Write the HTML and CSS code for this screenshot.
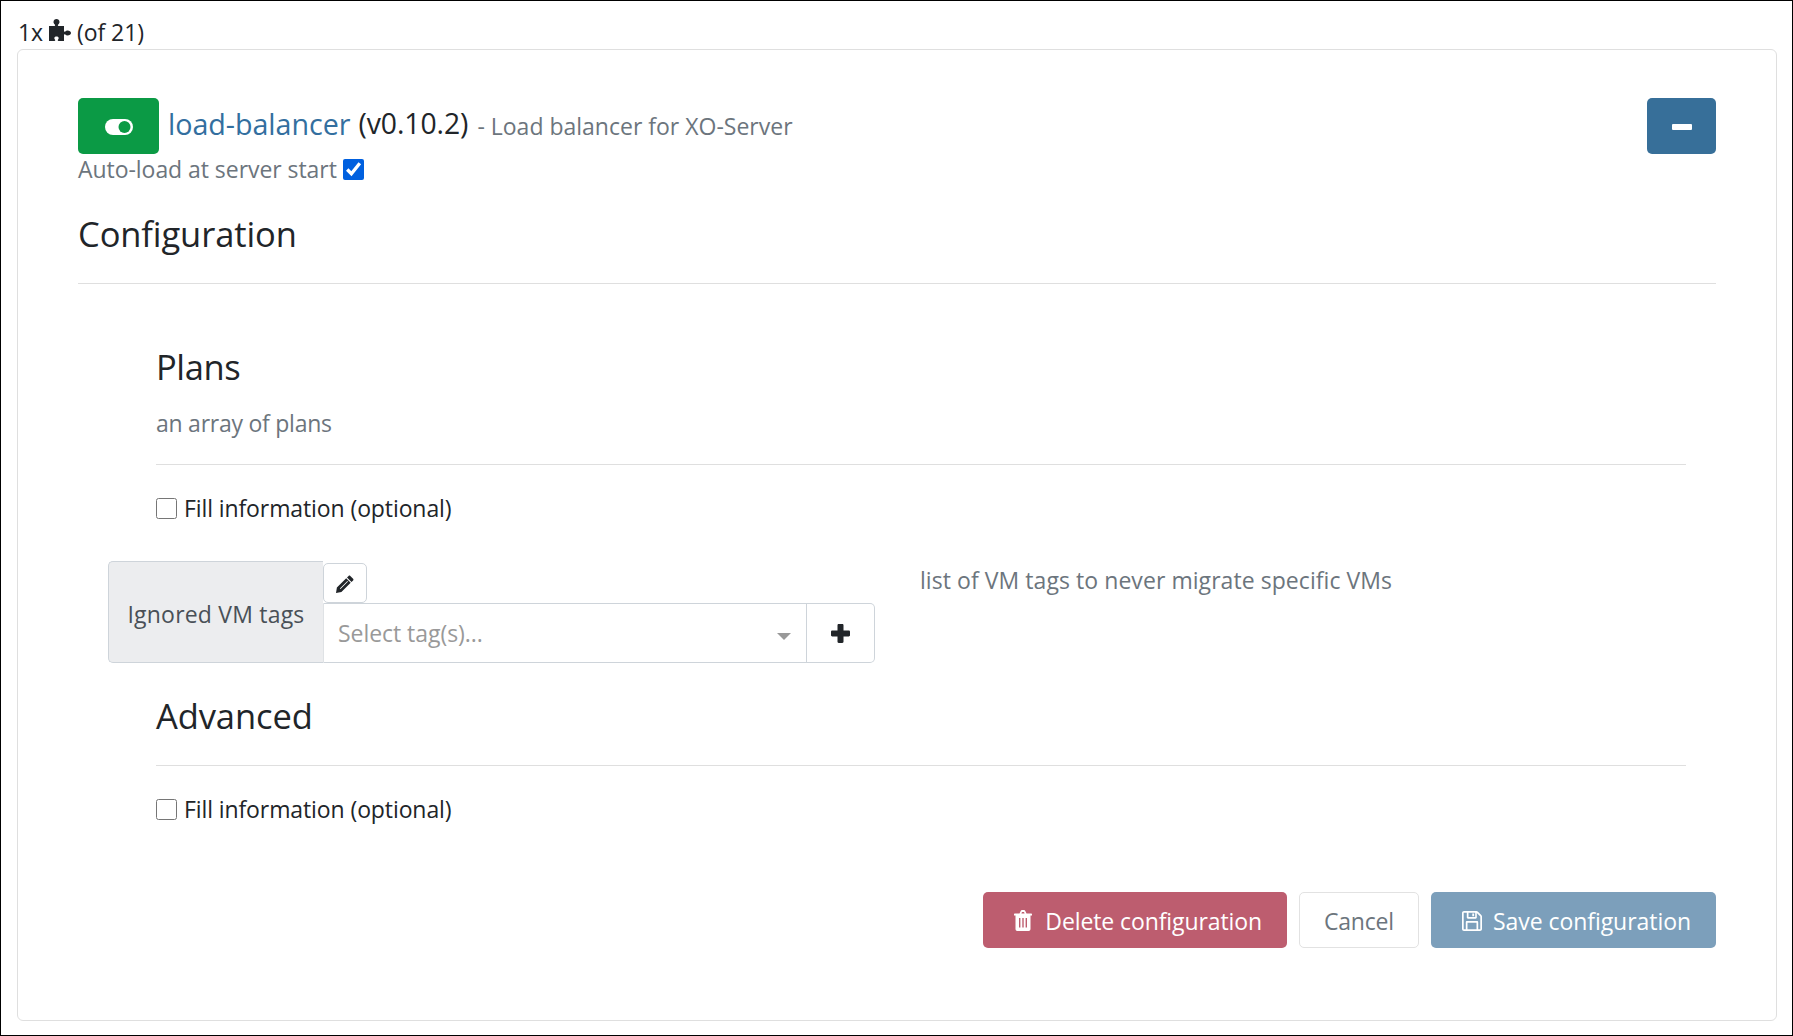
FILE: index.html
```html
<!DOCTYPE html>
<html lang="en">
<head>
<meta charset="utf-8">
<title>Plugins</title>
<link rel="stylesheet" href="styles.css">
</head>
<body>
<div class="frame">
  <div class="count">1x <svg class="i-puzzle" viewBox="0 0 22 22"><path d="M0 7h5.500c.8 0 .8-.8.3-1.400C5 4.800 4.500 4 4.500 3 4.500 1.200 5.900 0 7.500 0S10.500 1.200 10.500 3c0 1-.5 1.800-1.300 2.600C8.700 6.200 8.700 7 9.500 7H15v5c0 .8.700.9 1.300.4.600-.5 1.300-.9 2.200-.9 1.900 0 3.500 1 3.500 2.500s-1.600 2.500-3.500 2.500c-.9 0-1.600-.4-2.200-.9-.6-.5-1.300-.4-1.300.4V22H9.500c-.9 0-.9-.9-.4-1.500.4-.5.600-.9.600-1.500 0-1-.9-1.600-2.200-1.600s-2.200.6-2.200 1.600c0 .6.200 1 .6 1.500.5.600.5 1.500-.4 1.500H0z"/></svg> (of 21)</div>
  <section class="card">
    <header class="head">
      <div>
        <div class="title-row">
          <button class="btn-toggle" type="button"><svg class="i-toggle" viewBox="0 0 28 16"><rect width="28" height="16" rx="8" fill="#fff"/><circle cx="19.500" cy="8" r="6" fill="#0b9a45"/></svg></button>
          <a class="name">load-balancer</a>
          <span class="version">(v0.10.2)</span>
          <span class="desc">- Load balancer for XO-Server</span>
        </div>
        <label class="autoload">Auto-load at server start <input class="check checked" type="checkbox" checked></label>
      </div>
      <button class="btn-minus" type="button"><span class="minus-bar"></span></button>
    </header>
    <h2 class="config-title">Configuration</h2>
    <hr class="rule rule-config">
    <div class="form">
      <h3 class="sub-title plans">Plans</h3>
      <p class="muted plans-desc">an array of plans</p>
      <hr class="rule rule-plans">
      <label class="fill fill-plans"><input class="check" type="checkbox"> Fill information (optional)</label>
      <div class="tags-row">
        <div class="tags-label">Ignored VM tags</div>
        <div class="tags-control">
          <button class="btn-edit" type="button"><svg class="i-pencil" viewBox="0 0 18 18"><path d="M12.600.9c.5-.5 1.200-.5 1.700 0l2.800 2.800c.5.5.5 1.200 0 1.700L15.500 7 11 2.500z"/><path fill-rule="evenodd" d="M10.200 3.300l4.500 4.500-9.300 9.300L0 18l.9-5.400zM3.900 13.500l.6.600 7.500-7.500-.6-.6z"/></svg></button>
          <div class="select-group">
            <div class="select"><span class="placeholder">Select tag(s)...</span><span class="caret"></span></div>
            <div class="add"><svg class="i-plus" viewBox="0 0 19 19"><path d="M6.500 1.200c0-.6.500-1.200 1.200-1.200h3.600c.7 0 1.200.6 1.200 1.200v5.300h5.300c.6 0 1.200.5 1.200 1.200v3.600c0 .7-.6 1.200-1.200 1.200h-5.300v5.300c0 .6-.5 1.200-1.200 1.200H7.700c-.7 0-1.200-.6-1.200-1.200v-5.300H1.200C.6 12.500 0 12 0 11.300V7.700c0-.7.600-1.200 1.200-1.200h5.300z"/></svg></div>
          </div>
        </div>
        <p class="muted tags-desc">list of VM tags to never migrate specific VMs</p>
      </div>
      <h3 class="sub-title advanced">Advanced</h3>
      <hr class="rule rule-advanced">
      <label class="fill fill-advanced"><input class="check" type="checkbox"> Fill information (optional)</label>
    </div>
    <div class="actions">
      <button class="btn btn-delete" type="button"><svg class="i-trash" viewBox="0 0 18 21"><path fill-rule="evenodd" d="M5.500 3.500 6.700.9C7 .4 7.400 0 8 0h2c.6 0 1 .4 1.300.9l1.200 2.600H17c.6 0 1 .4 1 1v.9H16.500V19c0 1.200-.8 2-1.800 2H3.300c-1 0-1.800-.8-1.800-2V5.400H0v-.9c0-.6.400-1 1-1zM7.400 3.500h3.200l-.6-1.400H8zM5 8v9.500h1.400V8zM8.300 8v9.500h1.400V8zM11.600 8v9.500H13V8z"/></svg>Delete configuration</button>
      <button class="btn btn-cancel" type="button">Cancel</button>
      <button class="btn btn-save" type="button"><svg class="i-save" viewBox="0 0 20 20"><path fill-rule="evenodd" d="M2 0h12.500c.6 0 1.100.3 1.500.7l3.300 3.300c.4.400.7.900.7 1.500V18c0 1.100-.9 2-2 2H2c-1.100 0-2-.9-2-2V2C0 .9.900 0 2 0zM1.700 1.700v16.600h2.100v-7c0-.7.500-1.200 1.200-1.200h10c.7 0 1.200.5 1.200 1.200v7h2.100V5.600l-3.500-3.600v4.500c0 .7-.5 1.200-1.200 1.200H6c-.7 0-1.200-.5-1.200-1.200V1.700zM6.500 1.700v4.300h6.700V1.700zM10.300 2.400h1.800v2.900h-1.800zM5.500 11.800v6.500h9v-6.500z"/></svg>Save configuration</button>
    </div>
  </section>
</div>
</body>
</html>
```
FILE: styles.css
```css
* { box-sizing: border-box; }
html, body { margin: 0; padding: 0; background: #fff; }
body {
  font-family: "Open Sans", "Liberation Sans", sans-serif;
  font-size: 23px;
  letter-spacing: -0.05px;
  color: #212529;
}
.frame {
  height: 1036px;
  border: 1px solid #000;
  padding: 0 15px 14px 16px;
  overflow: hidden;
}
.count {
  height: 48px;
  padding: 14px 0 0 1px;
  line-height: 32px;
  display: flex;
  align-items: center;
  white-space: pre;
}
.i-puzzle { width: 22px; height: 22px; fill: #212529; margin-top: -4px; }
.card {
  height: 972px;
  border: 1px solid #dfdfdf;
  border-radius: 6px;
  padding: 48px 60px 0;
}
.head { display: flex; justify-content: space-between; align-items: flex-start; }
.title-row { display: flex; align-items: center; height: 56px; white-space: nowrap; }
.btn-toggle, .btn-minus {
  width: 81px;
  height: 56px;
  border: 0;
  border-radius: 5px;
  padding: 0;
  display: flex;
  align-items: center;
  justify-content: center;
  background: #0b9a45;
}
.btn-minus { width: 69px; background: #376f99; }
.i-toggle { width: 28px; height: 16px; margin-top: 2px; }
.minus-bar { width: 20px; height: 6px; border-radius: 1px; background: #fff; margin-top: 2px; }
.name { color: #336f9f; font-size: 28.7px; margin-left: 9px; margin-top: -6px; }
.version { font-size: 28.3px; margin-left: 8px; margin-top: -6px; }
.desc { color: #6c757d; margin-left: 9px; letter-spacing: 0; }
.autoload {
  display: flex;
  align-items: center;
  height: 32px;
  padding-bottom: 2px;
  line-height: 30px;
  color: #6c757d;
  white-space: pre;
  letter-spacing: -0.05px;
}
.check { width: 21px; height: 21px; margin: 0; accent-color: #0060df; flex: none; }
.config-title { margin: 24px 0 0; font-size: 34.5px; line-height: 48px; font-weight: 400; letter-spacing: -0.1px; }
.rule { margin: 0; border: 0; border-top: 1px solid #dfdfdf; }
.rule-config { margin-top: 25px; }
.form { padding: 0 30px 0 78px; }
.sub-title { margin: 0; font-size: 34.5px; line-height: 44px; font-weight: 400; letter-spacing: -0.1px; }
.plans { margin-top: 61px; letter-spacing: -0.4px; }
.muted { margin: 0; color: #6c757d; line-height: 32px; }
.plans-desc { margin-top: 18px; letter-spacing: -0.25px; }
.rule-plans { margin-top: 25px; }
.fill { display: flex; align-items: center; gap: 7px; height: 32px; letter-spacing: -0.1px; }
.fill-plans { margin-top: 27px; }
.fill-advanced { margin-top: 27px; }
.tags-row { display: flex; align-items: flex-start; margin: 37px 0 0 -48px; }
.tags-label {
  width: 215px;
  height: 102px;
  display: flex;
  align-items: center;
  justify-content: center;
  padding-top: 4px;
  background: #ecedef;
  border: 1px solid #ced4da;
  border-right: 0;
  border-radius: 5px 0 0 5px;
  color: #495057;
  letter-spacing: 0.2px;
}
.tags-control { width: 552px; height: 102px; padding-top: 2px; }
.btn-edit {
  display: flex;
  align-items: center;
  justify-content: center;
  width: 44px;
  height: 40px;
  padding: 0;
  background: #fff;
  border: 1px solid #ced4da;
  border-radius: 5px;
}
.i-pencil { width: 18px; height: 18px; fill: #212529; margin-top: 2px; }
.select-group {
  display: flex;
  height: 60px;
  border: 1px solid #ced4da;
  border-left-color: #dfe2e5;
  border-radius: 0 5px 5px 0;
}
.select {
  flex: 1;
  display: flex;
  align-items: center;
  justify-content: space-between;
  padding: 0 15px 0 14px;
  border-right: 1px solid #ced4da;
}
.placeholder { color: #999; }
.caret {
  width: 0;
  height: 0;
  margin-top: 6px;
  border-left: 7px solid transparent;
  border-right: 7px solid transparent;
  border-top: 7px solid #999;
}
.add { width: 67px; display: flex; align-items: center; justify-content: center; }
.i-plus { width: 19px; height: 19px; fill: #212529; }
.tags-desc { margin: 3px 0 0 45px; letter-spacing: 0.06px; }
.advanced { margin-top: 31px; }
.rule-advanced { margin-top: 27px; }
.actions { display: flex; justify-content: flex-end; gap: 12px; margin-top: 67px; }
.btn {
  height: 56px;
  padding: 1px 24px 0 24px;
  border: 1px solid transparent;
  border-radius: 5px;
  display: flex;
  align-items: center;
  font: inherit;
  letter-spacing: inherit;
  color: #fff;
}
.btn-delete { background: #bd5d6f; letter-spacing: -0.1px; }
.btn-cancel { background: #fff; border-color: #e2e2e2; color: #6c757d; letter-spacing: -0.2px; }
.btn-save { background: #7c9fbb; }
.i-trash { width: 18px; height: 21px; fill: #fff; margin: 0 13px 0 6px; }
.i-save { width: 20px; height: 20px; fill: #fff; margin: 0 11px 0 6px; }
```
